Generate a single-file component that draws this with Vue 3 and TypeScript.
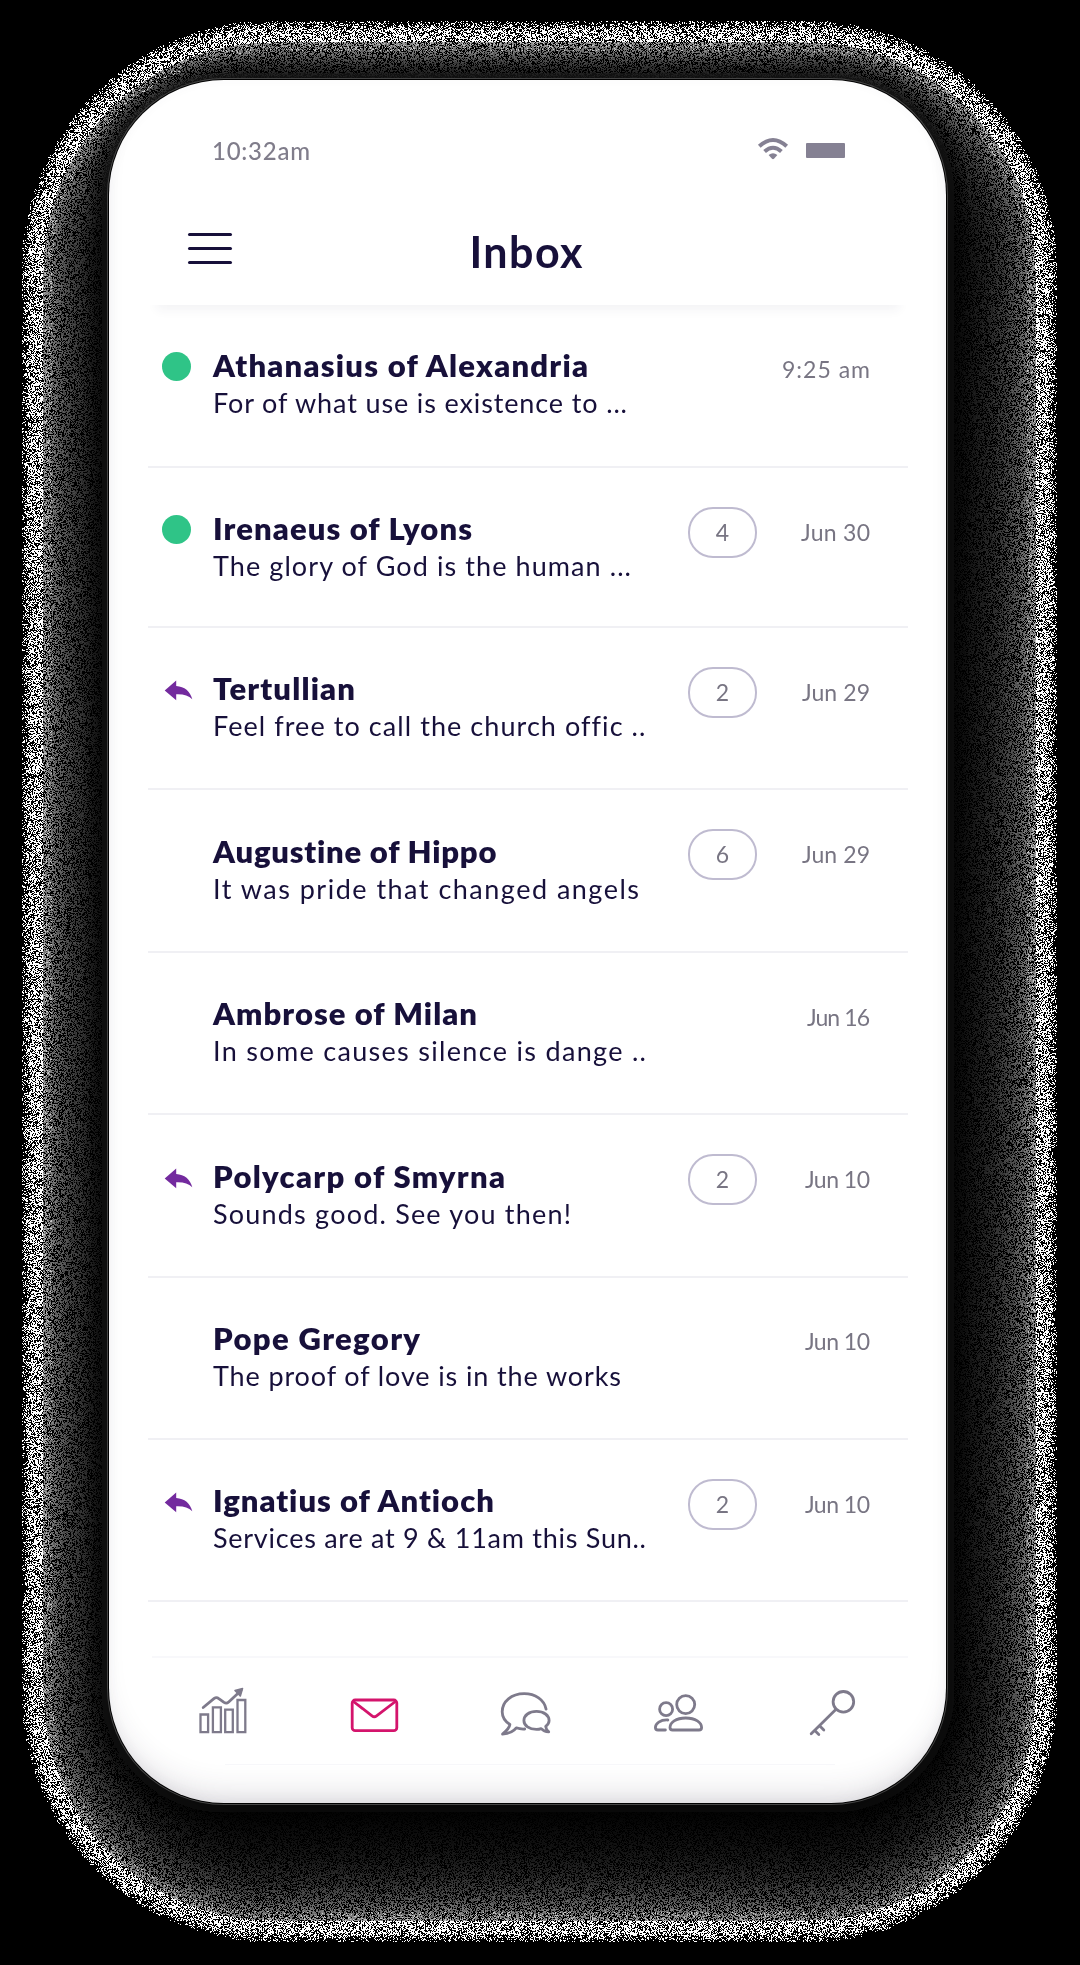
<script setup lang="ts">
import { onMounted, ref } from 'vue'

type Marker = 'unread' | 'replied' | null

interface Message {
  sender: string
  senderWidth: number
  preview: string
  previewWidth: number
  marker: Marker
  count: number | null
  date: string
  dateWidth: number
}

const messages: Message[] = [
  { sender: 'Athanasius of Alexandria', senderWidth: 375, preview: 'For of what use is existence to ...', previewWidth: 414, marker: 'unread', count: null, date: '9:25 am', dateWidth: 88 },
  { sender: 'Irenaeus of Lyons', senderWidth: 259, preview: 'The glory of God is the human ...', previewWidth: 418, marker: 'unread', count: 4, date: 'Jun 30', dateWidth: 69 },
  { sender: 'Tertullian', senderWidth: 142, preview: 'Feel free to call the church offic ..', previewWidth: 431, marker: 'replied', count: 2, date: 'Jun 29', dateWidth: 68 },
  { sender: 'Augustine of Hippo', senderWidth: 284, preview: 'It was pride that changed angels', previewWidth: 426, marker: null, count: 6, date: 'Jun 29', dateWidth: 68 },
  { sender: 'Ambrose of Milan', senderWidth: 264, preview: 'In some causes silence is dange ..', previewWidth: 433, marker: null, count: null, date: 'Jun 16', dateWidth: 63 },
  { sender: 'Polycarp of Smyrna', senderWidth: 292, preview: 'Sounds good. See you then!', previewWidth: 358, marker: 'replied', count: 2, date: 'Jun 10', dateWidth: 65 },
  { sender: 'Pope Gregory', senderWidth: 207, preview: 'The proof of love is in the works', previewWidth: 408, marker: null, count: null, date: 'Jun 10', dateWidth: 65 },
  { sender: 'Ignatius of Antioch', senderWidth: 282, preview: 'Services are at 9 & 11am this Sun..', previewWidth: 433, marker: 'replied', count: 2, date: 'Jun 10', dateWidth: 65 },
]

// Tracks a line of text out or in so that it fills the given width.
const vFit = {
  mounted(el: HTMLElement, binding: { value: number }) {
    const natural = el.getBoundingClientRect().width
    const gaps = (el.textContent ?? '').trim().length - 1
    const spacing = (binding.value - natural) / gaps
    el.style.letterSpacing = `${spacing}px`
    el.style.marginRight = `${-spacing}px`
  },
}

const halo = ref<HTMLCanvasElement | null>(null)

// Signed distance into a rounded rectangle; positive inside.
function inset(x: number, y: number, l: number, t: number, r: number, b: number, rad: number): number {
  const qx = Math.abs(x - (l + r) / 2) - (r - l) / 2 + rad
  const qy = Math.abs(y - (t + b) / 2) - (b - t) / 2 + rad
  return rad - Math.hypot(Math.max(qx, 0), Math.max(qy, 0)) - Math.min(Math.max(qx, qy), 0)
}

onMounted(() => {
  const canvas = halo.value
  const ctx = canvas?.getContext('2d')
  if (!canvas || !ctx) return
  const { width, height } = canvas
  const image = ctx.createImageData(width, height)
  let seed = 20240611
  const random = (): number => {
    seed = (seed * 1664525 + 1013904223) >>> 0
    return seed / 4294967296
  }
  for (let y = 0; y < height; y++) {
    for (let x = 0; x < width; x++) {
      const n = random()
      const m = random()
      const d = inset(x, y, 21, 20, 1057, 1942, 250)
      const gap = -inset(x, y, 109, 80, 946, 1804, 115)
      let v = 0
      if (d > 0 && gap > -2) {
        if (d < 22) {
          v = n < 0.14 + Math.min(d / 10, 1) * 0.42 ? 255 : 0
        } else {
          const level = 150 * Math.exp(-(d - 21) / 34) * Math.min(1, 0.35 + gap / 40)
          v = n < 0.6 ? level * (0.75 + m * 0.5) : 0
          if (d < 31 && m > 0.9) v = 200
          if (gap < 8) v = Math.max(v, 22 - d * 0.1)
        }
      }
      const i = (y * width + x) * 4
      image.data[i] = image.data[i + 1] = image.data[i + 2] = v
      image.data[i + 3] = 255
    }
  }
  ctx.putImageData(image, 0, 0)
})
</script>

<template>
  <div class="stage">
    <canvas ref="halo" class="halo" width="1080" height="1965"></canvas>
    <main class="phone">
      <div class="status">
        <span v-fit="98" class="clock">10:32am</span>
        <svg class="wifi" width="32" height="24" viewBox="756 137 32 24">
          <path d="M758.3 146.2Q772 133.8 785.7 146.2" fill="none" stroke="#858193" stroke-width="4" />
          <path d="M763.6 151.5Q772 144 780.4 151.5" fill="none" stroke="#858193" stroke-width="4" />
          <path d="M767.6 155Q772 151.3 776.4 155L773 158.7Q772 159.6 771 158.7Z" fill="#858193" />
        </svg>
        <span class="battery"></span>
      </div>
      <header class="header">
        <div class="menu"><i></i><i></i><i></i></div>
        <h1><span v-fit="113">Inbox</span></h1>
      </header>
      <ul class="list">
        <li v-for="message in messages" :key="message.sender" class="row">
          <div class="marker">
            <span v-if="message.marker === 'unread'" class="dot"></span>
            <svg v-else-if="message.marker === 'replied'" class="reply" width="30" height="22" viewBox="0 0 30 22">
              <path d="M0.7 10.6L12.2 0.6V6C20.5 6.5 26.3 11.4 28.3 19.2C24.4 15.6 19.6 14 12.2 14.3V20.2Z" fill="#732a9e" />
            </svg>
          </div>
          <div class="text">
            <h2><span v-fit="message.senderWidth">{{ message.sender }}</span></h2>
            <p><span v-fit="message.previewWidth">{{ message.preview }}</span></p>
          </div>
          <div class="meta">
            <span v-if="message.count" class="count">{{ message.count }}</span>
            <span class="date"><span v-fit="message.dateWidth">{{ message.date }}</span></span>
          </div>
        </li>
      </ul>
      <nav class="tabs">
        <svg viewBox="194.5 1684 56 60">
          <path d="M200 1714.5h7.6v17.7h-7.6zM212.4 1707.4h8v24.8h-8zM224.7 1709.7h7.6v22.5h-7.6zM237 1700h7.8v32.2h-7.8z" stroke-width="2.3" stroke-linejoin="miter" />
          <path d="M202.7 1707.5L213.7 1698.4Q216 1696.8 218.3 1698.6L223.5 1702.4Q226 1704 228.2 1702L240.5 1690.4" />
          <path d="M234.5 1690.5L242 1688.5L239.8 1696Z" stroke-width="1.6" fill="#7e7a8b" />
        </svg>
        <svg class="active" viewBox="347 1684 56 60">
          <rect x="352.2" y="1700" width="44.6" height="30.7" rx="3" />
          <path d="M353.4 1701.5L372 1715.8Q374.3 1717.6 376.6 1715.8L395.4 1701.5" />
        </svg>
        <svg viewBox="499.3 1684 56 60">
          <path d="M546.4 1709.2C544.6 1699.8 535.5 1693.7 524.5 1693.7C511.8 1693.7 502.5 1701.5 502.5 1711.8C502.5 1717 505.3 1721.4 510.2 1724.5C509.8 1727.8 507.2 1730.5 502.8 1734.1C508.7 1733.6 513.8 1731.5 516.6 1727.8Q520.5 1729.3 525 1729" />
          <path d="M536.8 1711.4C529.6 1711.4 524.2 1715.3 524.2 1720.5C524.2 1725.7 529.6 1729.4 536.8 1729.4Q539.4 1729.4 541.5 1728.6Q544.3 1731.6 549 1731.9Q546.2 1729.3 546 1726.3C548.3 1724.7 549.4 1722.7 549.4 1720.5C549.4 1715.3 544 1711.4 536.8 1711.4Z" />
        </svg>
        <svg viewBox="651.6 1684 56 60">
          <circle cx="685.3" cy="1704.6" r="9" />
          <circle cx="665.7" cy="1709.2" r="6.5" />
          <path d="M685.3 1718C675.5 1718 669.6 1722.7 669.6 1727.5Q669.6 1730 672.2 1730H698.6Q701.2 1730 701.2 1727.5C701.2 1722.7 695.2 1718 685.3 1718Z" />
          <path d="M667.5 1720C659.8 1719.6 655 1723.5 655 1727.5Q655 1730 657.6 1730H665" />
        </svg>
        <svg viewBox="804 1684 56 60">
          <circle cx="843.4" cy="1701.8" r="10.3" />
          <path d="M835.8 1709.5L811.2 1733.8M814.8 1730.5L818.8 1734.4M819.6 1725.8L823.8 1729.9" />
        </svg>
      </nav>
      <div class="base"></div>
    </main>
  </div>
</template>

<style>
body {
  background: #000;
}
</style>

<style scoped>
.stage {
  position: relative;
  box-sizing: border-box;
  width: 1080px;
  height: 1965px;
  padding: 80px 0 0 109px;
  background: #000;
  overflow: hidden;
  font-family: Lato, 'Liberation Sans', sans-serif;
  color: #17103a;
  white-space: nowrap;
}
.halo {
  position: absolute;
  top: 0;
  left: 0;
}
.phone {
  position: relative;
  box-sizing: border-box;
  width: 837px;
  height: 1723px;
  border-radius: 115px;
  background: #fff;
  box-shadow:
    0 0 0 1px #000,
    0 0 0 2px #454545,
    inset 0 -24px 34px -20px rgba(50, 40, 65, 0.2),
    inset 0 -2px 12px rgba(70, 70, 95, 0.05);
}
.status {
  display: flex;
  align-items: center;
  box-sizing: border-box;
  height: 141px;
  padding: 0 101px 0 103px;
}
.clock {
  font-size: 24px;
  font-weight: 500;
  color: #807d8b;
}
.wifi {
  margin-left: auto;
  margin-top: -4px;
}
.battery {
  width: 39px;
  height: 15px;
  margin-left: 17px;
  border-radius: 1px;
  background: #858193;
}
.header {
  display: grid;
  grid-template-columns: 1fr 1fr 1fr;
  box-sizing: border-box;
  width: 760px;
  height: 84px;
  margin-left: 39px;
  box-shadow: 0 14px 10px -9px rgba(45, 45, 90, 0.06);
}
.menu {
  display: flex;
  flex-direction: column;
  gap: 11px;
  padding: 12px 0 0 40px;
}
.menu i {
  width: 44px;
  height: 3px;
  border-radius: 2px;
  background: #17103a;
}
h1,
h2,
p {
  margin: 0;
}
h1 {
  margin: 5px 4px 0 0;
  font-size: 43px;
  line-height: 52px;
  font-weight: 700;
  text-align: center;
}
.list {
  width: 760px;
  margin: 0 0 0 39px;
  padding: 0;
  list-style: none;
}
.row {
  display: flex;
  box-sizing: border-box;
  height: 162.4px;
  padding-top: 42.4px;
  border-bottom: 2px solid #f0f0f4;
}
.row:nth-child(1) {
  height: 163px;
}
.row:nth-child(2) {
  height: 160px;
}
.marker {
  width: 65px;
  flex: none;
}
.dot {
  display: block;
  width: 29px;
  height: 29px;
  margin: 5px 0 0 14px;
  border-radius: 50%;
  background: #2fc487;
}
.reply {
  display: block;
  margin: 10px 0 0 16px;
}
.text {
  flex: 1;
}
h2 {
  font-size: 31px;
  line-height: 36px;
  font-weight: 800;
}
p {
  margin-top: 2px;
  font-size: 27px;
  line-height: 36px;
}
.meta {
  display: flex;
  align-items: center;
  height: 50px;
  margin-top: -3px;
  padding-right: 38px;
  font-size: 23px;
  color: #787583;
}
.count {
  display: flex;
  align-items: center;
  justify-content: center;
  box-sizing: border-box;
  width: 69px;
  height: 51px;
  padding-bottom: 1px;
  border: 2px solid #bfbbd0;
  border-radius: 25px;
}
.date {
  width: 113px;
  padding-bottom: 1px;
  text-align: right;
}
.tabs {
  display: flex;
  justify-content: space-between;
  box-sizing: border-box;
  width: 756px;
  height: 108px;
  margin: 53.3px 0 0 43px;
  padding: 26.5px 48px 0 42.5px;
  border-top: 2px solid #f8f8fb;
}
.tabs svg {
  width: 56px;
  height: 60px;
  fill: none;
  stroke: #7e7a8b;
  stroke-width: 2.8;
  stroke-linecap: round;
  stroke-linejoin: round;
}
.tabs svg.active {
  stroke: #d4146c;
}
.base {
  width: 610px;
  height: 1px;
  margin-left: 116px;
  background: #f7f7fa;
}
</style>
